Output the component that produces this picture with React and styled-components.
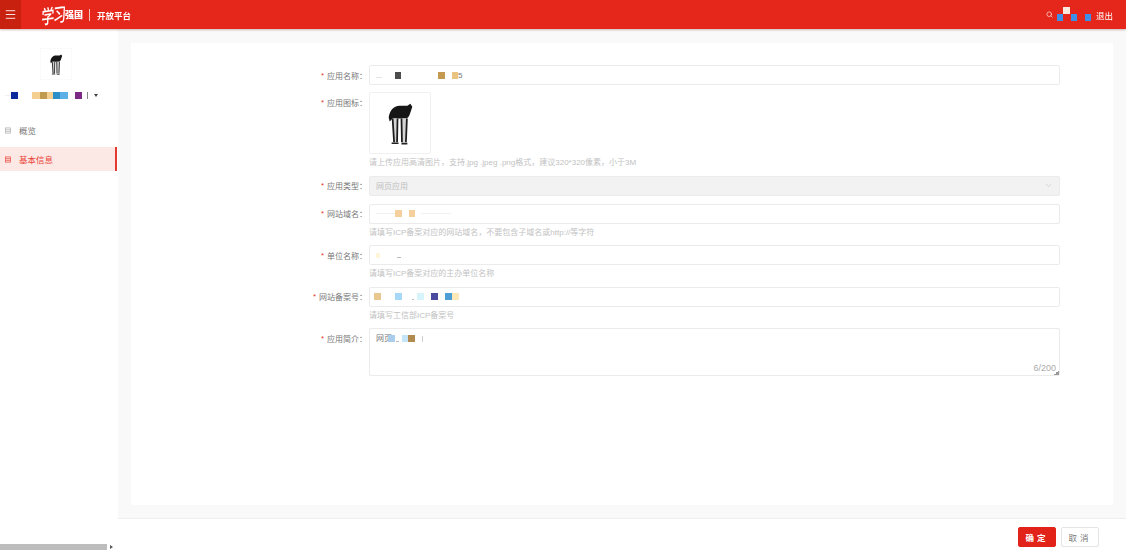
import styled, { createGlobalStyle } from "styled-components";
import { Menu, Search, ChevronDown } from "lucide-react";

const red = "#e5261a";
const font = `"Liberation Sans", "Noto Sans CJK SC", sans-serif`;

const GlobalStyle = createGlobalStyle`
  html, body { margin: 0; height: 100%; overflow: hidden; background: #fff; }
  * { box-sizing: border-box; }
`;

const Page = styled.div`
  height: 100vh;
  display: flex;
  flex-direction: column;
  font-family: ${font};
  font-size: 8px;
  color: #555;
  filter: blur(0.5px);
`;

/* header */
const Header = styled.header`
  flex: none;
  height: 29px;
  display: flex;
  align-items: center;
  background: ${red};
  box-shadow: 0 1px 2px rgba(120, 60, 50, 0.35);
  color: #fff;
  z-index: 2;
`;
const MenuBtn = styled.div`
  width: 21px;
  height: 100%;
  display: flex;
  align-items: center;
  justify-content: center;
  background: #c9210f;
`;
const LogoScript = styled.span`
  margin-left: 19px;
  width: 25px;
  font-family: "Noto Sans CJK SC", serif;
  font-size: 13px;
  font-weight: 500;
  font-style: italic;
  letter-spacing: -1px;
  white-space: nowrap;
  line-height: 1;
  transform: rotate(-8deg) scaleY(1.45);
`;
const LogoName = styled.span`
  font-family: "Noto Sans CJK SC", serif;
  font-size: 9px;
  font-weight: 900;
`;
const LogoDivider = styled.span`
  width: 1px;
  height: 12px;
  margin: 0 7px 0 6px;
  background: rgba(255, 255, 255, 0.7);
`;
const LogoTitle = styled.span`
  font-family: "Noto Sans CJK SC", serif;
  font-size: 8.5px;
  font-weight: 700;
`;
const UserArea = styled.div`
  margin-left: auto;
  margin-right: 13px;
  display: flex;
  align-items: center;
  height: 100%;
`;
const Logout = styled.span`
  margin-left: 5px;
  font-size: 8.5px;
`;

/* redacted pieces */
const Blob = styled.i`
  flex: none;
  display: block;
  width: ${(p) => p.$w}px;
  height: ${(p) => p.$h || 7}px;
  margin-left: ${(p) => p.$gap || 0}px;
  margin-top: ${(p) => p.$top || 0}px;
  background: ${(p) => p.$color};
`;
const Pieces = ({ items }) =>
  items.map(([gap, w, color, h, top], i) => (
    <Blob key={i} $gap={gap} $w={w} $color={color} $h={h} $top={top} />
  ));

const Body = styled.div`
  flex: 1;
  min-height: 0;
  display: flex;
`;

/* sidebar */
const Sidebar = styled.aside`
  flex: none;
  width: 118px;
  display: flex;
  flex-direction: column;
  background: #fff;
`;
const Avatar = styled.div`
  align-self: center;
  width: 32px;
  height: 32px;
  margin: 19px 0 0 -7px;
  border: 1px solid #fafafa;
  display: flex;
`;
const NameRow = styled.div`
  height: 9px;
  margin: 11px 0 0 5px;
  display: flex;
  align-items: center;
`;
const Caret = styled.span`
  margin-left: 6px;
  width: 0;
  height: 0;
  border-top: 3px solid #444;
  border-left: 2.5px solid transparent;
  border-right: 2.5px solid transparent;
`;
const MenuList = styled.nav`
  margin-top: 18px;
  display: flex;
  flex-direction: column;
  gap: 5px;
`;
const MenuItem = styled.div`
  width: 117px;
  height: 24px;
  padding-left: 5px;
  display: flex;
  align-items: center;
  gap: 8px;
  font-size: 8.5px;
  color: ${(p) => (p.$active ? "#ea4236" : "#777")};
  background: ${(p) => (p.$active ? "#fce8e5" : "transparent")};
  border-right: 2px solid ${(p) => (p.$active ? "#e5392d" : "transparent")};
`;
const ScrollBar = styled.div`
  margin-top: auto;
  height: 6px;
  display: flex;
  align-items: center;
`;
const ScrollThumb = styled.div`
  width: 107px;
  height: 6px;
  background: #bdbdbd;
`;
const ScrollArrow = styled.div`
  margin-left: 3px;
  width: 0;
  height: 0;
  border-left: 3px solid #555;
  border-top: 2px solid transparent;
  border-bottom: 2px solid transparent;
`;

/* content */
const Content = styled.main`
  flex: 1;
  min-width: 0;
  display: flex;
  flex-direction: column;
  background: #f9f9f9;
`;
const CardArea = styled.div`
  flex: 1;
  min-height: 0;
  padding: 14px 13px 13px;
  display: flex;
`;
const Card = styled.section`
  flex: 1;
  padding-top: 22px;
  background: #fff;
`;
const Footer = styled.footer`
  flex: none;
  height: 32px;
  padding: 8px 27px 0 0;
  display: flex;
  justify-content: flex-end;
  gap: 5px;
  background: #fff;
  border-top: 1px solid #eee;
`;
const Button = styled.button`
  width: 38px;
  height: 20px;
  padding: 0;
  border: 1px solid ${(p) => (p.$primary ? "#e2231a" : "#e4e4e4")};
  border-radius: 2px;
  background: ${(p) => (p.$primary ? "#e2231a" : "#fff")};
  color: ${(p) => (p.$primary ? "#fff" : "#777")};
  font-family: ${font};
  font-size: 8.5px;
  font-weight: ${(p) => (p.$primary ? 700 : 400)};
  letter-spacing: 3px;
`;

/* form */
const Field = styled.div`
  display: grid;
  grid-template-columns: 236px 691px;
  column-gap: 2px;
  margin-bottom: ${(p) => p.$mb || 7}px;
`;
const Label = styled.label`
  height: 20px;
  display: flex;
  align-items: center;
  justify-content: flex-end;
  color: #777;
  white-space: nowrap;
  &::before {
    content: "*";
    margin-right: 3px;
    color: #e5392d;
  }
`;
const Input = styled.div`
  height: 20px;
  padding: 0 6px;
  display: flex;
  align-items: center;
  border: 1px solid #ebebeb;
  border-radius: 2px;
  background: #fff;
  color: #777;
`;
const SelectBox = styled(Input)`
  justify-content: space-between;
  background: #f2f2f2;
  color: #c0c0c0;
`;
const TextArea = styled.div`
  position: relative;
  height: 48px;
  padding: 4px 6px;
  display: flex;
  align-items: flex-start;
  border: 1px solid #ebebeb;
  border-radius: 2px;
  line-height: 12px;
  color: #777;
`;
const Counter = styled.span`
  position: absolute;
  right: 3px;
  bottom: 1px;
  font-size: 9px;
  color: #aaa;
`;
const Grip = styled.span`
  position: absolute;
  right: 0;
  bottom: 0;
  width: 5px;
  height: 5px;
  background: linear-gradient(135deg, transparent 50%, #999 50%);
`;
const Hint = styled.div`
  height: 14.5px;
  padding-top: 1px;
  display: flex;
  align-items: center;
  font-size: 8px;
  color: #c2c2c2;
  white-space: nowrap;
`;
const IconBox = styled.div`
  width: 62px;
  height: 62px;
  border: 1px solid #f0f0f0;
  border-radius: 2px;
  display: flex;
`;

const InkFigure = () => (
  <svg viewBox="0 0 61 61" width="100%" height="100%" fill="none">
    <path
      d="M19 25c1-7 5-12 11-12h8l3-2 2 3-2 6c-1 4-3 6-5 6H23l-3 3z"
      fill="#161616"
    />
    <path d="M23 26h5l-1 24h-3z" fill="#d4d4d4" />
    <path d="M32 26h5l-1 24h-3z" fill="#d4d4d4" />
    <path d="M23 26l1.5 24M28 26l-.5 24" stroke="#1c1c1c" strokeWidth="1.8" />
    <path d="M32 26l.5 24M37.5 26l-1 24" stroke="#1c1c1c" strokeWidth="1.8" />
    <path d="M22 51h7M32 51.5h6" stroke="#222" strokeWidth="1.6" />
  </svg>
);

const MenuGlyph = ({ color }) => (
  <svg viewBox="0 0 7 7" width="6" height="7" fill="none" stroke={color} strokeWidth="0.8">
    <rect x="0.5" y="0.5" width="6" height="6" />
    <path d="M1 2.5h5M1 4.5h5" />
  </svg>
);

const nameBlobs = [
  [0, 6, "#eef2f5", 1],
  [0, 7, "#0c2a9c"],
  [14, 8, "#f5cf90"],
  [0, 7, "#c09a4e"],
  [0, 6, "#f5cf90"],
  [0, 7, "#2a8fc8"],
  [0, 8, "#5db0e6"],
  [7, 7, "#7c2a85"],
  [5, 1, "#888"],
];
const userBlobs = [
  [4, 6, "#3f8fe8", 7, 6],
  [0, 7, "#fbe9dd", 7, -8],
  [1, 6, "#3f8fe8", 7, 6],
  [8, 6, "#3f8fe8", 7, 6],
];
const nameValue = [
  [0, 6, "#e4e4e4", 1, 5],
  [13, 6, "#4d4d4d"],
  [37, 7, "#c39a50"],
  [7, 6, "#e9c481"],
];
const domainValue = [
  [0, 19, "#f1f1f1", 1],
  [0, 7, "#f5cf9c"],
  [7, 6, "#f5cf9c"],
  [6, 30, "#f1f1f1", 1],
];
const unitValue = [
  [0, 4, "#fdf6d8", 5],
  [17, 4, "#bbb", 1, 4],
];
const icpValue = [
  [-2, 7, "#e9c88f"],
  [14, 7, "#a8d8f8"],
  [10, 2, "#bbb", 1, 6],
  [3, 7, "#d8f4fb"],
  [7, 7, "#4a4a9f"],
  [7, 7, "#4d9fd6"],
  [0, 7, "#fde9b8"],
];
const introValue = [
  [-4, 7, "#a9cdea", 7, 2],
  [1, 3, "#bbb", 1, 8],
  [3, 6, "#c4e6f8", 7, 2],
  [0, 7, "#b08a4e", 7, 2],
  [7, 1, "#ccc", 6, 3],
];

export default function App() {
  return (
    <Page>
      <GlobalStyle />
      <Header>
        <MenuBtn>
          <Menu size={13} color="#fff" strokeWidth={1.6} />
        </MenuBtn>
        <LogoScript>学习</LogoScript>
        <LogoName>强国</LogoName>
        <LogoDivider />
        <LogoTitle>开放平台</LogoTitle>
        <UserArea>
          <Search size={7} color="#fbd5d0" strokeWidth={2.6} />
          <Pieces items={userBlobs} />
          <Logout>退出</Logout>
        </UserArea>
      </Header>
      <Body>
        <Sidebar>
          <Avatar>
            <InkFigure />
          </Avatar>
          <NameRow>
            <Pieces items={nameBlobs} />
            <Caret />
          </NameRow>
          <MenuList>
            <MenuItem>
              <MenuGlyph color="#aaa" />
              <span>概览</span>
            </MenuItem>
            <MenuItem $active>
              <MenuGlyph color="#ea4236" />
              <span>基本信息</span>
            </MenuItem>
          </MenuList>
          <ScrollBar>
            <ScrollThumb />
            <ScrollArrow />
          </ScrollBar>
        </Sidebar>
        <Content>
          <CardArea>
            <Card>
              <Field>
                <Label>应用名称：</Label>
                <Input>
                  <Pieces items={nameValue} />
                  <span>5</span>
                </Input>
              </Field>
              <Field>
                <Label>应用图标：</Label>
                <div>
                  <IconBox>
                    <InkFigure />
                  </IconBox>
                  <Hint>请上传应用高清图片，支持.jpg .jpeg .png格式，建议320*320像素，小于3M</Hint>
                </div>
              </Field>
              <Field $mb={8}>
                <Label>应用类型：</Label>
                <SelectBox>
                  <span>网页应用</span>
                  <ChevronDown size={9} color="#bbb" strokeWidth={1.5} />
                </SelectBox>
              </Field>
              <Field>
                <Label>网站域名：</Label>
                <div>
                  <Input>
                    <Pieces items={domainValue} />
                  </Input>
                  <Hint>请填写ICP备案对应的网站域名，不要包含子域名或http://等字符</Hint>
                </div>
              </Field>
              <Field>
                <Label>单位名称：</Label>
                <div>
                  <Input>
                    <Pieces items={unitValue} />
                  </Input>
                  <Hint>请填写ICP备案对应的主办单位名称</Hint>
                </div>
              </Field>
              <Field>
                <Label>网站备案号：</Label>
                <div>
                  <Input>
                    <Pieces items={icpValue} />
                  </Input>
                  <Hint>请填写工信部ICP备案号</Hint>
                </div>
              </Field>
              <Field>
                <Label>应用简介：</Label>
                <TextArea>
                  <span>网页</span>
                  <Pieces items={introValue} />
                  <Counter>6/200</Counter>
                  <Grip />
                </TextArea>
              </Field>
            </Card>
          </CardArea>
          <Footer>
            <Button $primary>确定</Button>
            <Button>取消</Button>
          </Footer>
        </Content>
      </Body>
    </Page>
  );
}
